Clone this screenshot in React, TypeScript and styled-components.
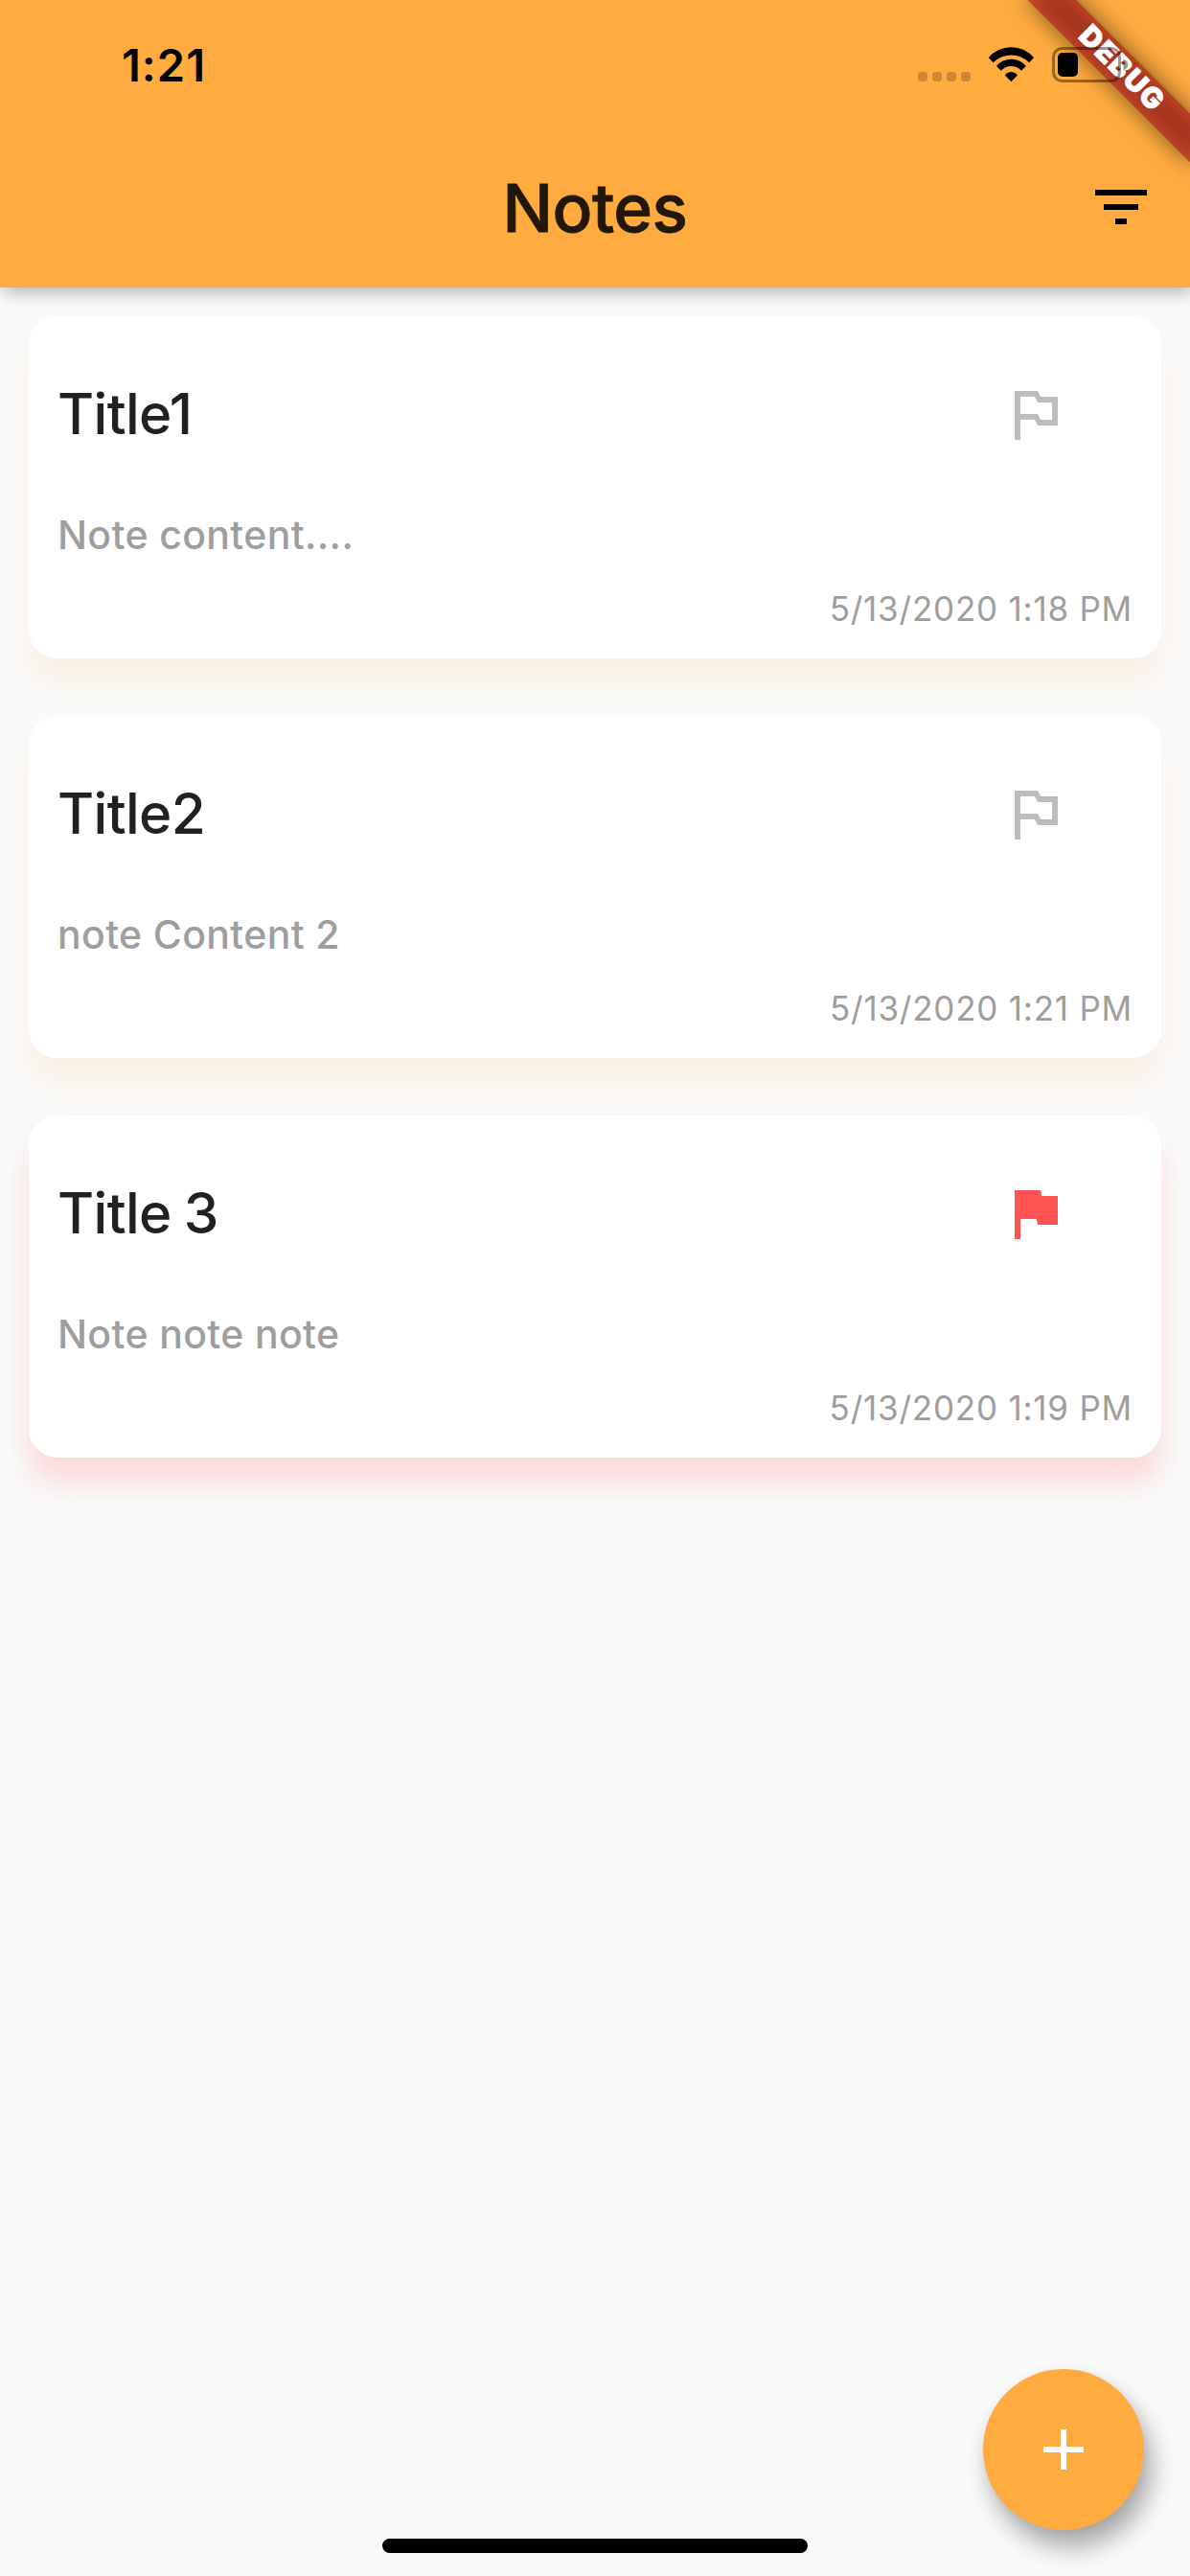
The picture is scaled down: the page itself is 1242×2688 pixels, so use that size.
import React from "react";
import styled, { createGlobalStyle } from "styled-components";

const Global = createGlobalStyle`
  html, body { margin: 0; padding: 0; background: #fafafa; }
  * { box-sizing: border-box; }
`;

const Screen = styled.div`
  position: relative;
  width: 1242px;
  height: 2688px;
  overflow: hidden;
  display: flex;
  flex-direction: column;
  background: #fafafa;
  font-family: Inter, Roboto, "Liberation Sans", sans-serif;
`;

const Header = styled.header`
  flex: none;
  height: 300px;
  background: #ffab40;
  box-shadow: 3px 6px 16px rgba(0, 0, 0, 0.26);
`;

const StatusBar = styled.div`
  display: flex;
  justify-content: space-between;
  height: 132px;
  padding: 40px 65px 0 127px;
`;

const Clock = styled.div`
  height: 56px;
  line-height: 56px;
  font-size: 47px;
  font-weight: 600;
  letter-spacing: 1px;
  color: #000;
`;

const StatusIcons = styled.svg`
  position: relative;
  z-index: 2;
  display: block;
  width: 222px;
  height: 54px;
`;

const AppBar = styled.div`
  display: grid;
  grid-template-columns: 108px 1fr 72px;
  align-items: center;
  height: 168px;
  padding-right: 36px;
`;

const AppTitle = styled.h1`
  grid-column: 2;
  margin: 0;
  padding-top: 1px;
  text-align: center;
  font-size: 69.4px;
  line-height: 84px;
  font-weight: 500;
  letter-spacing: -0.5px;
  color: #21180b;
  -webkit-text-stroke: 0.8px #21180b;
`;

const Glyph = styled.svg<{ $color: string }>`
  display: block;
  width: 72px;
  height: 72px;
  fill: ${(p) => p.$color};
`;

const NoteList = styled.main`
  display: flex;
  flex-direction: column;
  gap: 60px;
  padding: 30px;
`;

const Card = styled.article<{ $important: boolean }>`
  display: flex;
  flex-direction: column;
  height: 357px;
  padding: 66px 30px 0;
  border-radius: 30px;
  background: #fff;
  box-shadow: ${(p) =>
    p.$important
      ? "0 27px 30px rgba(255, 82, 82, 0.18)"
      : "0 27px 30px rgba(255, 165, 64, 0.11)"};
`;

const CardTop = styled.div`
  display: flex;
  justify-content: space-between;
  align-items: center;
  height: 72px;
  padding-right: 66px;
`;

const NoteTitle = styled.h2`
  margin: 0;
  font-size: 58.4px;
  line-height: 72px;
  font-weight: 500;
  letter-spacing: -0.6px;
  word-spacing: -2px;
  color: #212121;
`;

const NoteText = styled.p`
  margin: 65px 0 0;
  font-size: 41px;
  line-height: 50px;
  font-weight: 500;
  letter-spacing: 0.36px;
  color: #9e9e9e;
`;

const NoteDate = styled.time`
  align-self: flex-end;
  margin-top: 30px;
  font-size: 35px;
  line-height: 44px;
  font-weight: 400;
  letter-spacing: 0.78px;
  color: #9e9e9e;
`;

const AddButton = styled.button`
  position: absolute;
  right: 48px;
  bottom: 48px;
  display: flex;
  align-items: center;
  justify-content: center;
  width: 168px;
  height: 168px;
  padding: 0;
  border: 0;
  border-radius: 50%;
  background: #ffab40;
  box-shadow: 8px 18px 27px rgba(0, 0, 0, 0.33), 0 2px 12px rgba(0, 0, 0, 0.05);
`;

const HomeIndicator = styled.div`
  position: absolute;
  left: 399px;
  bottom: 24px;
  width: 444px;
  height: 15px;
  border-radius: 8px;
  background: #000;
`;

const Ribbon = styled.div`
  position: absolute;
  z-index: 1;
  left: 1050px;
  top: 54px;
  width: 240px;
  height: 36px;
  transform: rotate(45deg);
  color: #fff;
  font-size: 30px;
  line-height: 32px;
  font-weight: 900;
  letter-spacing: 1.6px;
  text-indent: 1px;
  text-align: center;
  -webkit-text-stroke: 0.8px #fff;
`;

const RibbonShadow = styled.div`
  position: absolute;
  inset: 0;
  background: rgba(0, 0, 0, 0.5);
  filter: blur(12px);
`;

const RibbonBand = styled.div`
  position: absolute;
  inset: 0;
  background: rgba(183, 28, 28, 0.627);
`;

const RibbonLabel = styled.span`
  position: relative;
`;

const FLAG_OUTLINE =
  "M5 4H13L14 6H20V16H13L12 14H7V21H5ZM7 6V12H13L14 14H18V8H13L12 6Z";
const FLAG_FILLED = "M14.4 6L14 4H5v17h2v-7h5.6l.4 2h7V6z";

const notes = [
  { title: "Title1", text: "Note content....", date: "5/13/2020 1:18 PM", important: false },
  { title: "Title2", text: "note Content 2", date: "5/13/2020 1:21 PM", important: false },
  { title: "Title 3", text: "Note note note", date: "5/13/2020 1:19 PM", important: true },
];

function Status() {
  return (
    <StatusIcons viewBox="955 40 222 54" overflow="visible">
      {[958, 973, 988, 1003].map((x) => (
        <rect key={x} x={x} y="75" width="10" height="10" rx="3.4" fill="#000" fillOpacity="0.2" />
      ))}
      <path d="M1031.8 60.3A30.6 30.6 0 0 1 1079 60.3L1074.2 65.2A26.5 26.5 0 0 0 1036.6 65.2Z" />
      <path d="M1040 69A19.8 19.8 0 0 1 1070.8 69L1066 73.8A14 14 0 0 0 1044.8 73.8Z" />
      <path d="M1048.8 78.6A8 8 0 0 1 1062 78.6L1055.4 85.2Z" />
      <g fillOpacity="0.4" strokeOpacity="0.4">
        <rect x="1099.5" y="50.5" width="69" height="34" rx="9" fill="none" stroke="#000" strokeWidth="3" />
        <path d="M1172.5 61.5C1179 64 1179 71 1172.5 73.5Z" />
      </g>
      <rect x="1104" y="55" width="21" height="25" rx="5" />
    </StatusIcons>
  );
}

export default function App() {
  return (
    <Screen>
      <Global />
      <Header>
        <StatusBar>
          <Clock>1:21</Clock>
          <Status />
        </StatusBar>
        <AppBar>
          <AppTitle>Notes</AppTitle>
          <Glyph $color="#000" viewBox="0 0 24 24">
            <path d="M10 18h4v-2h-4v2zM3 6v2h18V6H3zm3 7h12v-2H6v2z" />
          </Glyph>
        </AppBar>
      </Header>
      <NoteList>
        {notes.map((n) => (
          <Card key={n.title} $important={n.important}>
            <CardTop>
              <NoteTitle>{n.title}</NoteTitle>
              <Glyph $color={n.important ? "#ff5252" : "#bdbdbd"} viewBox="0 0 24 24">
                <path fillRule="evenodd" d={n.important ? FLAG_FILLED : FLAG_OUTLINE} />
              </Glyph>
            </CardTop>
            <NoteText>{n.text}</NoteText>
            <NoteDate>{n.date}</NoteDate>
          </Card>
        ))}
      </NoteList>
      <AddButton aria-label="Add note">
        <Glyph $color="#fff" viewBox="0 0 24 24">
          <path d="M19 13h-6v6h-2v-6H5v-2h6V5h2v6h6v2z" />
        </Glyph>
      </AddButton>
      <HomeIndicator />
      <Ribbon>
        <RibbonShadow />
        <RibbonBand />
        <RibbonLabel>DEBUG</RibbonLabel>
      </Ribbon>
    </Screen>
  );
}
